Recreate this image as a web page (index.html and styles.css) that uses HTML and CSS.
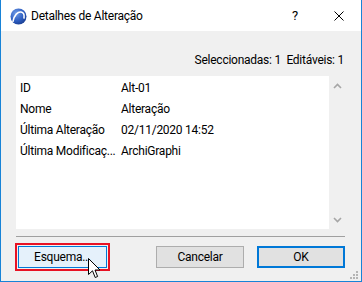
FILE: index.html
```html
<!DOCTYPE html>
<html>
<head>
  <meta charset="UTF-8">
  <title>Detalhes de Alteração</title>
  <link rel="stylesheet" href="styles.css">
</head>
<body>
  <div class="window">
    <!-- title bar -->
    <div class="titlebar">
      <svg class="app-icon" width="17" height="17" viewBox="0 0 17 17">
        <defs>
          <radialGradient id="ball" cx="0.35" cy="0.3" r="0.8">
            <stop offset="0" stop-color="#6f9be6"/>
            <stop offset="0.6" stop-color="#2c5cc0"/>
            <stop offset="1" stop-color="#183a8a"/>
          </radialGradient>
        </defs>
        <circle cx="8.5" cy="8.5" r="8" fill="url(#ball)"/>
        <path d="M3 13.5 C4 7 8 3.5 11 4 C13.5 4.5 14.5 7 14 10" fill="none" stroke="#fff" stroke-width="1.6" stroke-linecap="round"/>
      </svg>
      <span class="title">Detalhes de Alteração</span>
      <span class="help">?</span>
      <svg class="close" width="10" height="10" viewBox="0 0 10 10">
        <path d="M0.5 0.5 L9.5 9.5 M9.5 0.5 L0.5 9.5" stroke="#000" stroke-width="1"/>
      </svg>
    </div>

    <div class="content">
      <div class="counts">Seleccionadas: 1&nbsp;&nbsp;Editáveis: 1</div>

      <div class="list">
        <div class="rows">
          <div class="row"><span class="key">ID</span><span class="val">Alt-01</span></div>
          <div class="row"><span class="key">Nome</span><span class="val">Alteração</span></div>
          <div class="row"><span class="key">Última Alteração</span><span class="val">02/11/2020 14:52</span></div>
          <div class="row"><span class="key">Última Modificaç...</span><span class="val">ArchiGraphi</span></div>
        </div>
        <div class="scrollbar">
          <svg width="9" height="6" viewBox="0 0 9 6"><path d="M1 5 L4.5 1.5 L8 5" fill="none" stroke="#a6a6a6" stroke-width="1.6"/></svg>
          <svg width="9" height="6" viewBox="0 0 9 6"><path d="M1 1 L4.5 4.5 L8 1" fill="none" stroke="#a6a6a6" stroke-width="1.6"/></svg>
        </div>
      </div>

      <div class="separator"></div>

      <div class="buttons">
        <span class="highlight"><button class="btn btn-hover">Esquema...</button></span>
        <div class="spacer"></div>
        <button class="btn">Cancelar</button>
        <button class="btn btn-default">OK</button>
      </div>
    </div>

    <svg class="cursor" width="13" height="21" viewBox="0 0 13 21">
      <path d="M0.5 0.5 L0.5 16.5 L4.5 12.8 L7.2 19.5 L9.6 18.5 L7 12 L12 12 Z" fill="#fff" stroke="#000" stroke-width="1" stroke-linejoin="miter"/>
    </svg>

    <svg class="grip" width="10" height="10" viewBox="0 0 10 10">
      <rect x="7" y="1" width="2" height="2" fill="#b5b5b5"/>
      <rect x="4" y="4" width="2" height="2" fill="#b5b5b5"/>
      <rect x="7" y="4" width="2" height="2" fill="#b5b5b5"/>
      <rect x="1" y="7" width="2" height="2" fill="#b5b5b5"/>
      <rect x="4" y="7" width="2" height="2" fill="#b5b5b5"/>
      <rect x="7" y="7" width="2" height="2" fill="#b5b5b5"/>
    </svg>
  </div>
</body>
</html>
```

FILE: styles.css
```css
body { margin: 0; font-family: Roboto, "Liberation Sans", sans-serif; font-size: 12px; letter-spacing: -0.25px; color: #000; }

.window { position: relative; width: 362px; height: 282px; box-sizing: border-box; border: 1px solid #1883d7; border-top: none; background: #f0f0f0; overflow: hidden; }

.titlebar { height: 31px; background: #fff; display: flex; align-items: center; }
.app-icon { margin-left: 9px; margin-top: 1px; }
.title { margin-left: 4px; flex: 1; }
.help { width: 10px; margin-right: 32px; font-size: 13px; }
.close { margin-right: 17px; }

.content { padding: 20px 16px 0 15px; }

.counts { text-align: right; line-height: 18px; margin-right: 1px; }

.list { display: flex; height: 153px; margin-top: 7px; }
.rows { flex: 1; background: #fff; padding-top: 1px; }
.row { display: flex; height: 21px; align-items: center; }
.key { width: 101px; padding-left: 4px; white-space: nowrap; }
.val { white-space: nowrap; }
.scrollbar { width: 16px; display: flex; flex-direction: column; justify-content: space-between; align-items: center; padding: 7px 0 6px; }

.separator { border-top: 1px solid #a0a0a0; margin-top: 7px; }

.buttons { display: flex; align-items: center; margin-top: 9px; }
.spacer { flex: 1; }
.highlight { display: flex; padding: 1px; border: 2px solid #e81123; margin-left: -1px; margin-top: -3px; margin-bottom: -3px; }
.btn { width: 88px; height: 22px; box-sizing: border-box; font: inherit; letter-spacing: inherit; background: #e1e1e1; border: 1px solid #adadad; padding: 0; margin: 0; color: #000; }
.btn-hover { background: #e5f1fb; border-color: #0078d7; width: 89px; }
.btn-default { border: 2px solid #0078d7; margin-left: 13px; }

.cursor { position: absolute; left: 87px; top: 258px; }
.grip { position: absolute; right: 2px; bottom: 1px; }
```
